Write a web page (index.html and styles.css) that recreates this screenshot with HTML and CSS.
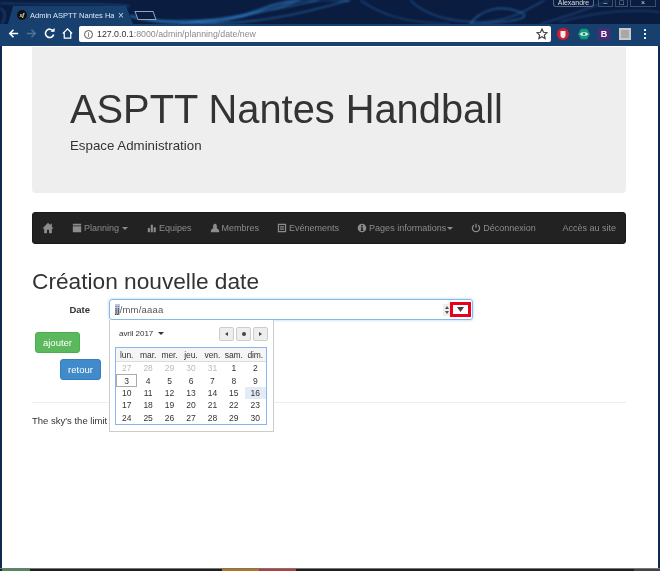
FILE: index.html
```html
<!DOCTYPE html>
<html lang="fr">
<head>
<meta charset="utf-8">
<title>Admin ASPTT Nantes Handball</title>
<link rel="stylesheet" href="styles.css">
</head>
<body>
<div class="window">
  <header class="chrome">
    <svg class="wallpaper" viewBox="0 0 660 46" preserveAspectRatio="none" aria-hidden="true">
      <path class="w1" d="M130 16C170 26 220 26 260 10S330 0 350 0"/>
      <path class="w2" d="M180 24C240 18 290 6 320 0M200 24C270 24 320 8 350 0M150 20C220 24 270 12 300 0"/>
      <path class="w3" d="M360 0C380 14 400 22 450 24M410 0C420 10 440 22 480 22C510 22 530 8 545 0"/>
      <path class="w2" d="M470 24C480 10 500 4 520 12S490 24 470 24"/>
      <path class="w3" d="M0 8C8 12 4 20 2 24M560 22C590 14 620 8 660 12M540 24C570 16 600 4 610 0M0 3C50 6 90 2 130 6"/>
    </svg>
    <div class="titlebar">
      <div class="tab">
        <span class="favicon">sf</span>
        <span class="tab-title">Admin ASPTT Nantes Ha</span>
        <span class="tab-close">×</span>
      </div>
      <div class="newtab"></div>
      <div class="winbtns">
        <span class="profile">Alexandre</span>
        <span class="winbtn btn-min">–</span>
        <span class="winbtn btn-max">□</span>
        <span class="winbtn btn-close">×</span>
      </div>
    </div>
    <div class="toolbar">
      <svg class="tool" viewBox="0 0 14 14"><path class="st" d="M12 7H3M7 3 3 7l4 4"/></svg>
      <svg class="tool dim" viewBox="0 0 14 14"><path class="st" d="M2 7h9M7 3l4 4-4 4"/></svg>
      <svg class="tool" viewBox="0 0 14 14"><path class="st" d="M11 4.500A4.500 4.500 0 1 0 11.500 8"/><path class="fl" d="M8 5h4.500V1z"/></svg>
      <svg class="tool" viewBox="0 0 14 14"><path class="st thin" d="M2 7 7 2l5 5M3.500 6v6h7V6"/></svg>
      <div class="omnibox">
        <span class="infoicon">i</span>
        <span class="url"><b>127.0.0.1</b>:8000/admin/planning/date/new</span>
        <svg class="star" viewBox="0 0 12 12"><path d="M6 1l1.500 3.300 3.500.4-2.600 2.400.7 3.500L6 8.800 2.900 10.600l.7-3.500L1 4.700l3.500-.4z"/></svg>
      </div>
      <div class="exts">
        <svg class="ext" viewBox="0 0 12 12"><circle class="e-red" cx="6" cy="6" r="6"/><path class="e-white" d="M3.500 3h5v4.500C8.500 9 7 10 6 10.300 5 10 3.500 9 3.500 7.500z"/></svg>
        <svg class="ext" viewBox="0 0 12 12"><path class="e-green" d="M3 .8h6L12 6 9 11.200H3L0 6z"/><path class="e-white" d="M1.800 6C4 3.200 8 3.200 10.200 6 8 8.800 4 8.800 1.800 6z"/><circle class="e-green" cx="6" cy="6" r="1.500"/></svg>
        <span class="ext ext-b">B</span>
        <span class="ext ext-grey"></span>
        <span class="kebab"><i></i><i></i><i></i></span>
      </div>
    </div>
  </header>

  <main class="page">
    <section class="jumbotron">
      <h1>ASPTT Nantes Handball</h1>
      <p>Espace Administration</p>
    </section>

    <nav class="navbar">
      <a class="nav-home"><svg viewBox="0 0 14 14"><path d="M7 1 0.500 7.500H2.500V13H5.800V9H8.200V13H11.500V7.500H13.500L11.500 5.500V2H9.800V3.800z"/></svg></a>
      <a class="nav-planning"><svg viewBox="0 0 12 12"><path d="M1 1h10v2H1zM1 4h10v7H1z"/></svg>Planning<span class="caret gapped"></span></a>
      <a class="nav-item"><svg viewBox="0 0 12 12"><path d="M1 6h2.500v5H1zM4.500 2H7v9H4.500zM8 5h2.500v6H8z"/></svg>Equipes</a>
      <a class="nav-item"><svg viewBox="0 0 12 12"><path d="M6 1a2.500 3 0 0 1 2 4.500C8 7 11 7.500 11 9.500V11H1V9.500C1 7.500 4 7 4 5.500A2.500 3 0 0 1 6 1z"/></svg>Membres</a>
      <a class="nav-item"><svg viewBox="0 0 12 12"><path fill-rule="evenodd" d="M1 1h10v10H1zM2.500 2.500v7h7v-7zM3.500 3.500h5v1h-5zM3.500 5.500h5v1h-5zM3.500 7.500h5v1h-5z"/></svg>Evénements</a>
      <a class="nav-item"><svg viewBox="0 0 12 12"><path fill-rule="evenodd" d="M6 .8a5.200 5.200 0 1 0 0 10.400A5.200 5.200 0 0 0 6 .8zM5 2.500h2v1.800H5zM4.500 5h2.500v3.500h.7v1H4.300v-1H5V6h-.5z"/></svg>Pages informations<span class="caret"></span></a>
      <a class="nav-item"><svg viewBox="0 0 12 12"><path class="pw" d="M3.500 2.700a4.300 4.300 0 1 0 5 0M6 .8v5"/></svg>Déconnexion</a>
      <a class="nav-site">Accès au site</a>
    </nav>

    <h2>Création nouvelle date</h2>

    <form class="date-row">
      <label class="date-label">Date</label>
      <div class="date-input">
        <span class="date-value"><mark>jj</mark>/mm/aaaa</span>
        <span class="spin"><i class="up"></i><i class="down"></i></span>
        <span class="drop"><i></i></span>
      </div>
    </form>
    <div class="btn-line-1"><button class="btn btn-green">ajouter</button></div>
    <div class="btn-line-2"><button class="btn btn-blue">retour</button></div>
    <hr>
    <p class="footer">The sky's the limit ©</p>

    <div class="calendar">
      <div class="cal-head">
        <span class="cal-month">avril 2017<span class="caret dark"></span></span>
        <span class="cal-nav">
          <span class="cal-btn"><i class="tri-l"></i></span>
          <span class="cal-btn"><i class="dot"></i></span>
          <span class="cal-btn"><i class="tri-r"></i></span>
        </span>
      </div>
      <div class="cal-grid">
        <span class="dow">lun.</span><span class="dow">mar.</span><span class="dow">mer.</span><span class="dow">jeu.</span><span class="dow">ven.</span><span class="dow">sam.</span><span class="dow">dim.</span>
        <span class="off">27</span><span class="off">28</span><span class="off">29</span><span class="off">30</span><span class="off">31</span><span>1</span><span>2</span>
        <span class="today">3</span><span>4</span><span>5</span><span>6</span><span>7</span><span>8</span><span>9</span>
        <span>10</span><span>11</span><span>12</span><span>13</span><span>14</span><span>15</span><span class="hl">16</span>
        <span>17</span><span>18</span><span>19</span><span>20</span><span>21</span><span>22</span><span>23</span>
        <span>24</span><span>25</span><span>26</span><span>27</span><span>28</span><span>29</span><span>30</span>
      </div>
    </div>
  </main>

  <footer class="taskstrip">
    <i class="s-green"></i><i class="s-dark1"></i><i class="s-orange"></i><i class="s-red"></i><i class="s-dark2"></i><i class="s-grey"></i>
  </footer>
</div>
</body>
</html>
```
FILE: styles.css
```css
* { box-sizing: border-box; }
html, body { margin: 0; height: 100%; overflow: hidden; }
body { font-family: "Liberation Sans", Arial, sans-serif; background: #fff; color: #333; }
.window { width: 660px; height: 571px; display: flex; flex-direction: column; position: relative; overflow: hidden; background: #0f2a52; padding: 0 2px; filter: blur(.35px); }

/* browser chrome */
.chrome { height: 46px; margin: 0 -2px; position: relative; background: #0a1c40; flex: none; display: flex; flex-direction: column; }
.wallpaper { position: absolute; left: 0; top: 0; width: 100%; height: 46px; filter: blur(.8px); }
.wallpaper path { fill: none; }
.w1 { stroke: #2f7cc4; stroke-width: 3; opacity: .6; }
.w2 { stroke: #3a92dc; stroke-width: 1.200; opacity: .65; }
.w3 { stroke: #2f6cae; stroke-width: 1.200; opacity: .65; }
.titlebar { height: 24px; display: flex; align-items: flex-end; position: relative; padding-left: 8px; }
.tab { width: 125px; height: 18px; background: #17406f; clip-path: polygon(5px 0, 118px 0, 125px 100%, 0 100%); display: flex; align-items: center; padding-left: 9px; color: #dfe7f0; font-size: 7.500px; }
.favicon { width: 10px; height: 10px; border-radius: 50%; background: #111; color: #fff; font: italic bold 6px "Liberation Serif", serif; display: flex; align-items: center; justify-content: center; margin-right: 3px; flex: none; }
.tab-title { white-space: nowrap; width: 84px; overflow: hidden; }
.tab-close { font-size: 10px; margin-left: 4px; color: #c8d3e0; }
.newtab { width: 19px; height: 9px; margin: 0 0 4px 3px; background: #0a1c40; border: 1px solid #8ea4bf; transform: skewX(20deg); }
.winbtns { position: absolute; right: 4px; top: 0; height: 7px; display: flex; gap: 2px; color: #ddd; font-size: 7px; line-height: 6px; }
.profile { width: 41px; border: 1px solid #5a6a84; border-top: 0; border-radius: 0 0 3px 3px; text-align: center; height: 7px; font-size: 7px; margin-right: 2px; }
.winbtn { text-align: center; border: 1px solid #3d4f6e; border-top: 0; height: 7px; }
.btn-min { width: 15px; }
.btn-max { width: 13px; }
.btn-close { width: 26px; }
.toolbar { height: 22px; background: #17406f; position: relative; display: flex; align-items: flex-start; padding: 2px 0 0 7px; }
.tool { width: 13px; height: 13px; margin: 1px 5px 0 0; flex: none; }
.tool.dim { opacity: .25; }
.st { fill: none; stroke: #fff; stroke-width: 1.700; }
.st.thin { stroke-width: 1.300; }
.fl { fill: #fff; }
.omnibox { width: 472px; height: 16px; background: #fff; border-radius: 2px; display: flex; align-items: center; padding: 0 3px 0 5px; font-size: 8.800px; color: #8a8a8a; }
.infoicon { width: 9px; height: 9px; border: 1px solid #555; border-radius: 50%; color: #444; font-size: 7px; line-height: 7px; text-align: center; margin-right: 4px; flex: none; }
.url { flex: 1; white-space: nowrap; }
.url b { font-weight: 400; color: #333; }
.star { width: 12px; height: 12px; fill: none; stroke: #444; stroke-width: 1.200; }
.exts { display: flex; align-items: center; gap: 8.500px; margin: 2px 0 0 6px; }
.ext { width: 12px; height: 12px; display: block; }
.e-red { fill: #cf2030; }
.e-white { fill: #f4ecec; }
.e-green { fill: #0d9b7c; }
.ext-b { background: #4b2a76; color: #fff; font: bold 9px/12px "Liberation Sans", sans-serif; text-align: center; border-radius: 2px; }
.ext-grey { background: #a8a8a8; box-shadow: inset 0 0 0 2px #c9c9c9; }
.kebab { display: flex; flex-direction: column; gap: 2px; margin-left: 5px; }
.kebab i { width: 2px; height: 2px; background: #e6edf5; display: block; }

/* page */
.page { flex: 1; background: #fff; position: relative; padding: 1px 32px 0 30px; min-height: 0; }
.jumbotron { height: 146px; background: #eee; border-radius: 0 0 4px 4px; padding: 40px 38px 0; margin-bottom: 19px; }
.jumbotron h1 { margin: 0; font-size: 39.800px; font-weight: 400; line-height: 44px; color: #333; }
.jumbotron p { margin: 7px 0 0; font-size: 13.300px; line-height: 16px; }
.navbar { height: 32px; background: #222; border: 1px solid #1a1a1a; border-radius: 3px; display: flex; align-items: center; color: #8c8c8c; font-size: 9px; margin-bottom: 25px; padding-left: 9px; }
.navbar a { display: flex; align-items: center; white-space: nowrap; }
.navbar svg { width: 10px; height: 10px; fill: #8c8c8c; margin-right: 2px; flex: none; }
.navbar .nav-home svg { width: 12px; height: 12px; margin: 0; }
.nav-planning { margin-left: 18px; margin-right: 1px; }
.nav-item { margin-left: 18px; }
.nav-site { margin-left: auto; margin-right: 9px; }
.navbar .pw { fill: none; stroke: #8c8c8c; stroke-width: 1.500; }
.caret { width: 0; height: 0; border: 3px solid transparent; border-top-color: #8c8c8c; border-bottom: 0; display: inline-block; margin-left: 1px; }
.caret.gapped { margin-left: 3px; }
.caret.dark { border-top-color: #333; margin-left: 5px; vertical-align: 1px; }
h2 { margin: 0; font-size: 22.700px; font-weight: 400; line-height: 25px; color: #333; }
.date-row { display: flex; align-items: center; margin-top: 5px; height: 21px; }
.date-label { width: 77px; padding-right: 19px; text-align: right; font-size: 9.500px; font-weight: 700; }
.date-input { width: 364px; height: 21px; border: 1px solid #86b8ea; border-radius: 3px; box-shadow: 0 0 3px rgba(102,175,233,.6); display: flex; align-items: center; padding: 0 1px 0 5px; font-size: 9.500px; color: #555; position: relative; }
.date-value { flex: 1; letter-spacing: .2px; }
.date-value mark { background: #b9c6dc; color: #333; }
.spin { width: 7px; height: 12px; background: #eee; display: flex; flex-direction: column; justify-content: center; gap: 2px; align-items: center; }
.spin i { width: 0; height: 0; border: 2px solid transparent; }
.spin .up { border-bottom: 3px solid #555; border-top: 0; }
.spin .down { border-top: 3px solid #555; border-bottom: 0; }
.drop { width: 21px; height: 15px; border: 3px solid #e8001c; display: flex; align-items: center; justify-content: center; background: #fff; }
.drop i { width: 7px; height: 5px; background: #444; clip-path: polygon(0 0, 100% 0, 50% 100%); display: block; }
.btn { font: 400 9.500px "Liberation Sans", sans-serif; color: #fff; border-radius: 3px; height: 21px; display: block; padding: 0; }
.btn-line-1 { padding: 12px 0 0 3px; }
.btn-line-2 { padding: 6px 0 0 28px; }
.btn-green { width: 45px; background: #5cb85c; border: 1px solid #4cae4c; }
.btn-blue { width: 41px; background: #428bca; border: 1px solid #357ebd; }
hr { border: 0; border-top: 1px solid #eee; margin: 22px 0 0; }
.footer { margin: 12px 0 0; font-size: 9.500px; line-height: 12px; color: #333; }

/* calendar popup */
.calendar { position: absolute; left: 107px; top: 274px; width: 165px; height: 112px; background: #fff; border: 1px solid #ccc; border-top: 0; padding: 0 5px; }
.cal-head { height: 27px; display: flex; align-items: center; justify-content: space-between; padding: 0 0 0 4px; font-size: 8px; color: #333; }
.cal-month { letter-spacing: -.05px; }
.cal-nav { display: flex; gap: 2px; }
.cal-btn { width: 15px; height: 14px; background: #eee; border: 1px solid #ccc; border-radius: 2px; display: flex; align-items: center; justify-content: center; }
.tri-l { border: 2px solid transparent; border-right: 3px solid #444; border-left: 0; }
.tri-r { border: 2px solid transparent; border-left: 3px solid #444; border-right: 0; }
.dot { width: 4px; height: 4px; border-radius: 50%; background: #444; }
.cal-grid { width: 152px; height: 78px; border: 1px solid #8ab4f0; display: grid; grid-template-columns: repeat(7, 1fr); grid-template-rows: 14px repeat(5, 12.400px); font-size: 8.500px; color: #333; text-align: center; }
.cal-grid span { display: flex; align-items: center; justify-content: center; }
.cal-grid .dow { background: #f5f5f5; border-bottom: 1px solid #ddd; letter-spacing: -.1px; }
.cal-grid .off { color: #bbb; }
.cal-grid .today { border: 1px solid #aaa; background: #fff; }
.cal-grid .hl { background: #e3ebf7; }

/* strip at bottom */
.taskstrip { height: 3px; margin: 0 -2px; flex: none; display: flex; background: #1e1e1e; border-top: 1px solid #777; }
.taskstrip i { display: block; height: 100%; }
.s-green { width: 28px; margin-left: 2px; background: #4f8a5c; }
.s-dark1 { width: 192px; }
.s-orange { width: 37px; background: #b5751c; }
.s-red { width: 37px; background: #b83c3c; }
.s-dark2 { width: 338px; }
.s-grey { flex: 1; background: #444; }
```
